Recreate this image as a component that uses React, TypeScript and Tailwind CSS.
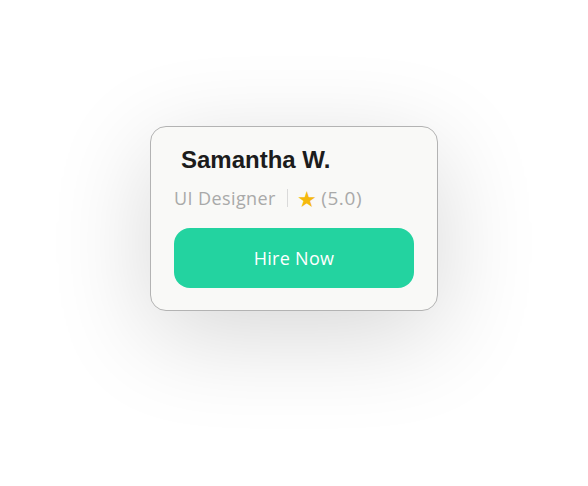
export default function App() {
  return (
    <div className="min-h-[486px] w-full bg-white flex justify-center pt-[126px]">
      <div className="w-[288px] h-[185px] rounded-[16px] border border-[#b3b3b3] bg-[#f9f9f7] shadow-[0_24px_100px_rgba(0,0,0,0.16)] px-[23px] pt-[18px]">
        <h2 className="pl-[7px] text-[24px] leading-[30px] font-bold text-[#1c1c1c] font-['Liberation_Sans',Arial,sans-serif]">
          Samantha W.
        </h2>
        <div className="mt-[10px] flex items-center text-[18px] leading-[26px] tracking-[0.4px] text-[#a9a9a9] font-['Open_Sans',sans-serif]">
          <span>UI Designer</span>
          <span className="ml-[11px] mr-[9px] h-[18px] w-px bg-[#dadada]" />
          <span className="text-[#f5b90d] text-[22px] leading-[26px] mr-[4px]">★</span>
          <span className="text-[19px] tracking-[0.6px]">(5.0)</span>
        </div>
        <button className="mt-[17px] w-[240px] h-[60px] rounded-[16px] bg-[#23d3a0] text-white text-[18px] tracking-[0.3px] font-['Open_Sans',sans-serif]">
          Hire Now
        </button>
      </div>
    </div>
  )
}
